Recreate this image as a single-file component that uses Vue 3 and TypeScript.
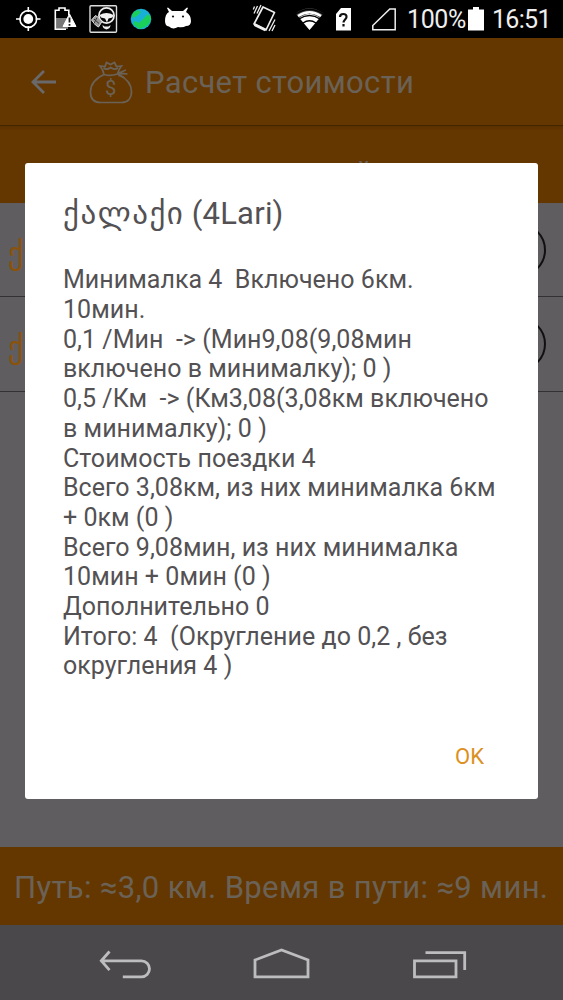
<script setup lang="ts">
const lines: string[] = [
  'Минималка 4  Включено 6км.',
  '10мин.',
  '0,1 /Мин  -> (Мин9,08(9,08мин',
  'включено в минималку); 0 )',
  '0,5 /Км  -> (Км3,08(3,08км включено',
  'в минималку); 0 )',
  'Стоимость поездки 4',
  'Всего 3,08км, из них минималка 6км',
  '+ 0км (0 )',
  'Всего 9,08мин, из них минималка',
  '10мин + 0мин (0 )',
  'Дополнительно 0',
  'Итого: 4  (Округление до 0,2 , без',
  'округления 4 )',
]
const tariffs: string[] = ['ქ', 'ქ']
</script>

<template>
  <div class="screen">
    <header class="status">
      <svg class="status-icons" width="200" height="38" viewBox="0 0 200 38">
        <g fill="none" stroke="#fff" stroke-width="1.6">
          <circle cx="28.3" cy="19" r="8.4" />
          <path d="M28.3 7v5M28.3 26v5M16 19h5M35.5 19h5" />
        </g>
        <circle cx="28.3" cy="19" r="4.9" fill="#fff" />
        <path d="M56 18h12v11H56z" fill="#777" />
        <path d="M66 29.300H55.300V10.300H59V8h6v2.300h3.800V15" fill="none" stroke="#fff" stroke-width="1.6" />
        <path d="M69.500 14 76 26.500H63z" fill="#fff" stroke="#fff" stroke-linejoin="round" />
        <path d="M69.500 17.500v5M69.500 24v1.800" stroke="#111" stroke-width="1.8" />
        <rect x="90" y="5.700" width="26.500" height="26.500" rx="1" fill="#050505" stroke="#ddd" stroke-width="1.4" />
        <circle cx="106.500" cy="15.500" r="7.600" fill="none" stroke="#eee" stroke-width="1.700" />
        <path d="M99.500 15q7-4 14 0l-1 2.500-4 1-1.500 4-2-4-4-1z" fill="#f2f2f2" />
        <path d="M102.500 25l2 1.500h4l2-1.500q0 3.500-4 4.500-4-1-4-4.500z" fill="#eee" />
        <path d="m91.500 20 4-4.500 3 2 3.500 4-3.500 5.500-3-2z" fill="#999" stroke="#e0e0e0" stroke-width="1" />
        <path d="m94 19 5 4.500m-2-6-3 6" stroke="#333" />
        <circle cx="141" cy="19" r="10.300" fill="#18b0d6" />
        <path d="M132 15q2-4 6-5l3 2-4 4-4 2zM148 14l3 3q0 7-6 10l-6 2-6-5 2-3 4 2 4-4z" fill="#1bd05a" />
        <path d="M165 21q0-7 4-9l-2-4 1-.5 4 3.500h11l4-3.500 1 .5-2 4q5 3 5 9 0 5-5 5-3 2-8 1-5 3-9-.5-4-.5-4-5.500z" fill="#fff" />
        <circle cx="173" cy="16.500" r="1.100" fill="#111" /><circle cx="183" cy="16.500" r="1.100" fill="#111" />
      </svg>
      <svg class="status-icons signals" width="162" height="38" viewBox="240 0 162 38">
        <g fill="none" stroke="#eee" stroke-width="1.5">
          <path d="m263 7 11.500 5.500-8.500 17.500-12-6z" stroke-width="1.7" stroke-linejoin="round" />
          <path d="m254.500 24.500 11 5.500" stroke-width="3" />
          <path d="m261 5-4 8.500M257.500 6l-3.500 7.500M254.500 6.500l-1.200 3M275 19.500l-6 11.500M275 25l-3 6" stroke-width="1.3" />
        </g>
        <path d="M295.500 13.500Q309.500 3 323.500 13.500L309.500 30z" fill="#444" />
        <path d="M299.500 18Q309.500 10 319.500 18L309.500 30z" fill="#fff" />
        <path d="M295 14.500q14.500-10 29 0M299 19q10.500-7 21 0M303 23q6.500-4.500 13 0" fill="none" stroke="#000" stroke-width="1.4" />
        <path d="M298 16q11.500-7.500 23 0" fill="none" stroke="#fff" stroke-width="2.3" />
        <path d="M341 8h10v22.500h-15V14z" fill="#fff" />
        <path d="M340 17q0-3 3.300-3t3.200 3c0 2.300-3 2.800-3 5.500m0 1.500v2.500" fill="none" stroke="#111" stroke-width="2.2" />
        <path d="M372.800 29.700v-4.200l17-16.500h5.400v20.700z" fill="none" stroke="#eee" stroke-width="1.5" />
      </svg>
      <span class="pct">100%</span>
      <svg class="battery" width="16" height="24" viewBox="0 0 16 24"><path d="M0 2.500h5V0h6v2.500h5V23.500H0z" fill="#fff" /></svg>
      <span class="clock">16:51</span>
    </header>

    <div class="toolbar">
      <svg class="back" width="26" height="26" viewBox="0 0 26 26"><path d="M25 13H2M13 2 2 13l11 11" fill="none" stroke="#69686a" stroke-width="2.8" /></svg>
      <svg class="bag" width="44" height="48" viewBox="0 0 44 48" fill="none" stroke="#6b6257" stroke-width="1.7">
        <path d="M15 17.500C5 22 1.500 29 1.500 35c0 8 4.500 10.500 10 10.500h21c6 0 10-4 10-11 0-8-6-13.500-13-17M15 17.500q-1-5-4-8.500l5 .5 1.500-4 4 2 4-2 2 4 5-.5q-3 3.500-4 8-7 2.500-13.500.5zM14.500 11q3.500 2.500 7-.5 4 3 7.500.5" />
        <path d="M28.500 15.500c3 1 6-2 8.500-2.500m-8.500 4.500q5-1.500 10-.5m-9 1.500q4 .5 6 2.500" />
        <text x="21.500" y="38" text-anchor="middle" class="dollar">$</text>
      </svg>
      <h1 class="title">Расчет стоимости</h1>
    </div>
    <div class="subheader"><span class="sub-text">й</span></div>

    <main class="list">
      <div v-for="(tariff, i) in tariffs" :key="i" class="row">
        <span class="tariff">{{ tariff }}</span><span class="ring"></span>
      </div>
    </main>

    <footer class="summary">Путь: ≈3,0 км. Время в пути: ≈9 мин.</footer>
    <nav class="nav">
      <svg class="nav-icons" width="563" height="75" viewBox="0 925 563 75" fill="none" stroke="#bdbcbf" stroke-width="2.8">
        <path d="M101 960.800h40.500a8 8 0 0 1 0 16h-18.700M109.500 951.500l-8.200 9.300 8.200 9.300" />
        <path d="M255 960v16.900h53V960l-26.500-10z" />
        <path d="M414.500 960.800h41.500v16.100h-41.500zM425.500 952.600h39.200v17.400" />
      </svg>
    </nav>

    <section class="dialog" role="dialog">
      <h2 class="dialog-title"><span class="georgian">ქალაქი</span> <span class="latin">(4Lari)</span></h2>
      <div class="details"><div v-for="line in lines" :key="line" class="line">{{ line }}</div></div>
      <button class="ok">OK</button>
    </section>
  </div>
</template>

<style>
body { margin: 0; background: #605d60; }
</style>
<style scoped>
.screen { position: relative; display: flex; flex-direction: column; width: 563px; height: 1000px; overflow: hidden; background: #605d60; font-family: Roboto, "DejaVu Sans", sans-serif; }
.status { display: flex; align-items: center; height: 38px; background: #000; color: #eee; font-size: 25px; letter-spacing: -.4px; flex: none; }
.status-icons { flex: none; }
.signals { margin-left: 40px; }
.pct { width: 65px; margin-left: 5px; white-space: nowrap; }
.battery { margin-left: -4px; flex: none; }
.clock { margin-left: 8px; letter-spacing: -.7px; }
.toolbar { display: flex; align-items: center; box-sizing: border-box; height: 88px; flex: none; background: #653700; border-bottom: 1px solid #432500; }
.back { margin-left: 31px; }
.bag { margin: -2px 0 0 32px; }
.dollar { font: 20px Roboto, sans-serif; fill: #6b6257; stroke: none; }
.title { margin: 2px 0 0 12px; font-size: 31px; font-weight: 400; letter-spacing: .32px; color: #6b6257; white-space: nowrap; }
.subheader { height: 77px; flex: none; background: linear-gradient(#5b3100, #653700 5px); }
.sub-text { display: block; padding: 28px 0 0 355px; font-size: 30px; line-height: 36px; color: #6b6257; }
.list { flex: 1; }
.row { box-sizing: border-box; display: flex; align-items: center; justify-content: space-between; height: 94.3px; padding: 0 17px 0 8px; border-bottom: 1px solid #333134; }
.tariff { margin-top: 7px; font-size: 30px; color: #8b520b; }
.ring { box-sizing: border-box; width: 54px; height: 54px; border: 2.5px solid #101010; border-radius: 50%; }
.summary { display: flex; align-items: center; box-sizing: border-box; height: 78px; padding: 3px 0 0 14px; flex: none; background: #653700; color: #6b6257; font-size: 31px; letter-spacing: .35px; white-space: nowrap; }
.nav { height: 75px; flex: none; background: #4a484b; }
.nav-icons { display: block; }
.dialog { position: absolute; left: 25px; top: 163px; box-sizing: border-box; width: 513px; height: 636px; padding: 32px 38px 0; display: flex; flex-direction: column; border-radius: 3px; background: #fff; color: #535153; }
.dialog-title { margin: 0; height: 38px; font-size: 30px; line-height: 38px; font-weight: 400; white-space: nowrap; }
.georgian { font-size: 31px; letter-spacing: 1.5px; }
.latin { font-size: 31px; letter-spacing: .2px; }
.details { margin-top: 32.4px; font-size: 25px; line-height: 29.7px; }
.line { height: 29.7px; white-space: pre; letter-spacing: .03px; }
.ok { align-self: flex-end; margin: 61.6px 16px 0 0; padding: 0; border: 0; background: none; font: 22px/28px Roboto, sans-serif; color: #dc9022; }
</style>
